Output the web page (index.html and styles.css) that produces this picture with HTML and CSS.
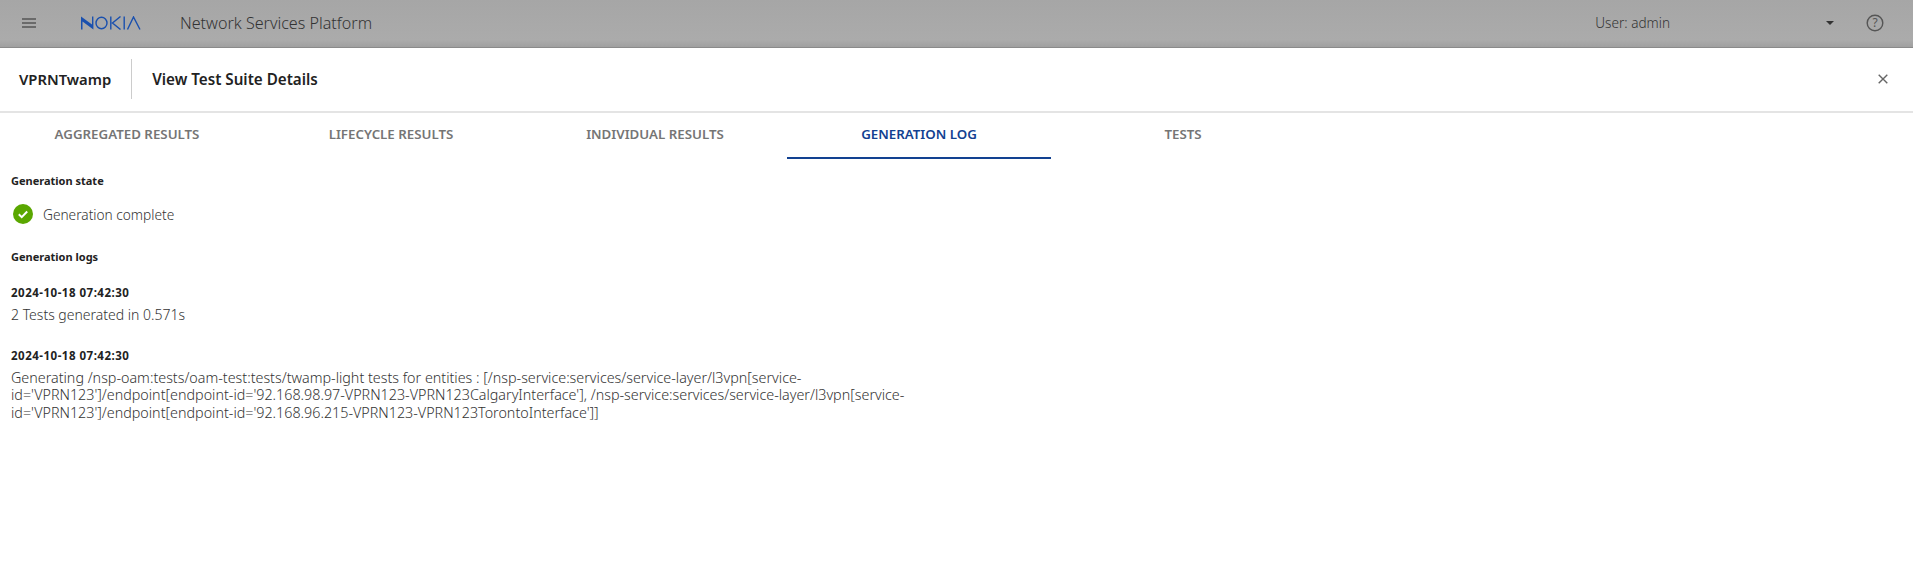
FILE: index.html
```html
<!DOCTYPE html>
<html lang="en">
<head>
<meta charset="utf-8">
<title>Network Services Platform</title>
<link rel="stylesheet" href="styles.css">
</head>
<body>
<header class="topbar">
  <svg class="menu-icon" width="14" height="10" viewBox="0 0 14 10"><path d="M0 1h14M0 5h14M0 9h14" stroke="#555" stroke-width="1.4" fill="none"/></svg>
  <svg class="logo" width="60" height="14" viewBox="0 0 60 14" role="img" aria-label="Nokia"><g fill="#1a50ae"><path d="M0 .5L11 8.5V.5h1.4V13.5L1.5 5.5V13.5H0z"/></g><g fill="none" stroke="#1a50ae" stroke-width="1.4"><ellipse cx="20.5" cy="7" rx="5.5" ry="5.8"/><path d="M29.8.5V13.5M39.5.5L31.5 7L39.5 13.5"/><path d="M43.2.5V13.5"/><path d="M46.5 13.5L52.5 1L59 13.5"/></g></svg>
  <span class="product">Network Services Platform</span>
  <span class="user">User: admin</span>
  <span class="caret"></span>
  <svg class="help" width="18" height="18" viewBox="0 0 18 18"><circle cx="9" cy="9" r="7.8" fill="none" stroke="#555" stroke-width="1.4"/><text x="9" y="13" text-anchor="middle" class="help-mark">?</text></svg>
</header>
<section class="titlebar">
  <span class="suite">VPRNTwamp</span>
  <span class="view-title">View Test Suite Details</span>
  <svg class="close" width="10" height="10" viewBox="0 0 10 10"><path d="M.7.7l8.6 8.6M9.3.7L.7 9.3" stroke="#666" stroke-width="1.4" fill="none"/></svg>
</section>
<nav class="tabs">
  <a class="tab">AGGREGATED RESULTS</a>
  <a class="tab">LIFECYCLE RESULTS</a>
  <a class="tab">INDIVIDUAL RESULTS</a>
  <a class="tab active">GENERATION LOG</a>
  <a class="tab">TESTS</a>
</nav>
<main class="content">
  <h2 class="label">Generation state</h2>
  <div class="state">
    <svg width="20" height="20" viewBox="0 0 20 20"><circle cx="10" cy="10" r="10" fill="#5aa700"/><path d="M5.8 10.3l2.9 2.8 5.5-5.6" fill="none" stroke="#fff" stroke-width="2"/></svg>
    <span>Generation complete</span>
  </div>
  <h2 class="label logs">Generation logs</h2>
  <article class="entry">
    <h3 class="stamp">2024-10-18 07:42:30</h3>
    <p class="msg short">2 Tests generated in 0.571s</p>
  </article>
  <article class="entry">
    <h3 class="stamp">2024-10-18 07:42:30</h3>
    <p class="msg">Generating /nsp-oam:tests/oam-test:tests/twamp-light tests for entities : [/nsp-service:services/service-layer/l3vpn[service-id='VPRN123']/endpoint[endpoint-id='92.168.98.97-VPRN123-VPRN123CalgaryInterface'], /nsp-service:services/service-layer/l3vpn[service-id='VPRN123']/endpoint[endpoint-id='92.168.96.215-VPRN123-VPRN123TorontoInterface']]</p>
  </article>
</main>
</body>
</html>
```
FILE: styles.css
```css
* { box-sizing: border-box; }
html, body { height: 100%; }
body {
  margin: 0;
  background: #fff;
  color: #333;
  font-family: "Noto Sans", "Open Sans", sans-serif;
  overflow: hidden;
}
.topbar {
  height: 48px;
  display: flex;
  align-items: center;
  background: linear-gradient(#a6a6a6, #ababab 85%, #a0a0a0);
  border-bottom: 1px solid #8a8a8a;
  padding-left: 22px;
  padding-bottom: 1px;
  color: #444;
}
.menu-icon { flex: none; }
.logo { flex: none; margin-left: 45px; }
.product { margin-left: 39px; font-size: 16.1px; font-weight: 300; color: #333; }
.user { margin-left: auto; margin-bottom: 2px; font-size: 13.6px; font-weight: 300; color: #333; }
.caret {
  margin-left: 156px;
  width: 0; height: 0;
  border-left: 4px solid transparent;
  border-right: 4px solid transparent;
  border-top: 4px solid #333;
}
.help { margin-left: 32px; margin-right: 29px; }
.help-mark { font-size: 12px; fill: #555; font-family: "Noto Sans", sans-serif; }
.titlebar {
  height: 65px;
  display: flex;
  align-items: center;
  border-bottom: 2px solid #e4e4e4;
  padding-left: 19px;
  padding-right: 25px;
  padding-bottom: 2px;
  font-weight: 600;
  font-size: 15px;
  color: #222;
}
.suite {
  padding-right: 20px;
  height: 40px;
  line-height: 40px;
  border-right: 1px solid #ccc;
  font-size: 14.8px;
}
.view-title { margin-left: 20px; font-size: 15.2px; }
.close { margin-left: auto; }
.tabs {
  display: flex;
  margin-left: -5px;
  height: 46px;
}
.tab {
  width: 264px;
  text-align: center;
  font-size: 13.3px;
  font-weight: 600;
  color: #757575;
  padding-top: 12px;
  border-bottom: 2px solid transparent;
}
.tab.active { color: #124191; border-bottom-color: #124191; }
.content { padding: 14px 11px; width: 918px; }
.label { margin: 0; font-size: 11px; line-height: 16px; font-weight: 700; color: #222; }
.state {
  display: flex;
  align-items: center;
  gap: 10px;
  margin: 15px 0 0 2px;
  font-size: 13.7px;
  font-weight: 300;
  color: #333;
  height: 20px;
}
.logs { margin-top: 25px; }
.entry { margin-top: 20px; }
.entry + .entry { margin-top: 24px; }
.stamp { margin: 0; font-size: 11.5px; letter-spacing: .5px; line-height: 16px; font-weight: 700; color: #222; }
.msg { margin: 5px 0 0; font-size: 14.3px; font-weight: 300; line-height: 17.5px; color: #333; }
.msg.short { font-size: 14px; }
```
